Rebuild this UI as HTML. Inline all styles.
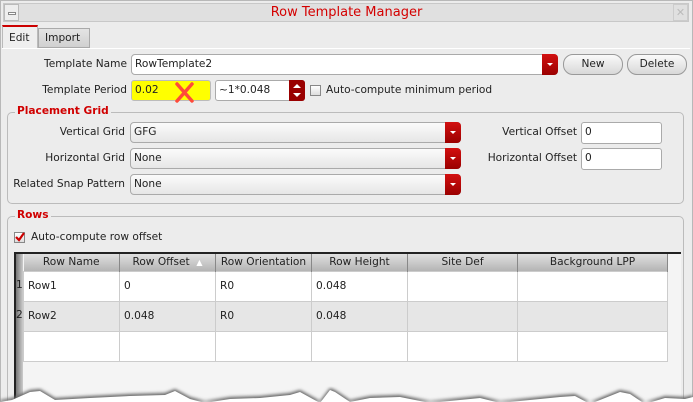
<!DOCTYPE html>
<html><head><style>
*{box-sizing:border-box;margin:0;padding:0}
html,body{width:693px;height:402px;overflow:hidden}
body{background:#fff;font-family:"DejaVu Sans","Liberation Sans",sans-serif;font-size:10.6px;color:#222;position:relative}
.a{position:absolute}
.win{left:0;top:0;width:693px;height:402px;background:#ececec;border:1px solid #b8b8b8}
.lbl{position:absolute;text-align:right;white-space:nowrap}
.inp{position:absolute;background:#fff;border:1px solid #aaa;border-radius:3px;padding-left:3px;line-height:19px}
.combo{position:absolute;border:1px solid #aaa;border-radius:4px;background:linear-gradient(#fbfbfb,#e6e6e6);padding-left:3px;line-height:19px}
.dd{position:absolute;right:-1px;top:-1px;bottom:-1px;width:16px;background:linear-gradient(#d21010,#9a0000);border-radius:0 4px 4px 0}
.dd:after{content:"";position:absolute;left:5px;top:9px;border-left:3px solid transparent;border-right:3px solid transparent;border-top:3px solid #fff}
.btn{position:absolute;border:1px solid #999;border-radius:10px;background:linear-gradient(#fafafa,#d8d8d8);text-align:center;line-height:19px}
.grp{position:absolute;border:1px solid #bbb;border-radius:5px}
.gt{position:absolute;color:#d00000;font-weight:bold;background:#ececec;padding:0 2px;line-height:12px}
.cb{position:absolute;width:11px;height:11px;border:1px solid #888;background:linear-gradient(#fff,#ddd)}
table{border-collapse:collapse;position:absolute;table-layout:fixed}
td{border:1px solid #ccc;height:30px;padding:0 0 0 4px;vertical-align:middle}
th{font-weight:normal;height:17px;background:linear-gradient(#e0e0e0,#b4b4b4);border-right:1px solid #888;text-align:center;padding:0}
</style></head><body>
<div class="a win"></div>
<div class="a" style="left:3px;top:3px;width:686px;height:19px;background:#e0e0e0;border:1px solid #c8c8c8"></div>
<div class="a" style="left:4px;top:4px;width:15px;height:17px;border:1px solid #bbb;background:#eee"><div class="a" style="left:3px;top:7px;width:8px;height:3px;border:1px solid #888;background:#fff"></div></div>
<div class="a" style="left:673px;top:4px;width:15px;height:17px;border:1px solid #ccc;color:#bbb;font-size:11px;text-align:center;line-height:16px">✕</div>
<div class="a" style="left:0;width:693px;top:5px;text-align:center;color:#d40000;font-size:13px">Row Template Manager</div>
<div class="a" style="left:2px;top:25px;width:36px;height:23px;background:#efefef;border-top:2px solid #c00;border-left:1px solid #bbb;border-right:1px solid #bbb;padding:5px 0 0 6px">Edit</div>
<div class="a" style="left:38px;top:28px;width:52px;height:20px;background:linear-gradient(#e4e4e4,#d0d0d0);border:1px solid #aaa;padding:3px 0 0 6px">Import</div>
<div class="a" style="left:2px;top:48px;width:688px;height:1px;background:#fff"></div>
<div class="lbl" style="right:566px;top:58px">Template Name</div>
<div class="combo" style="left:131px;top:54px;width:427px;height:21px;background:#fff">RowTemplate2<div class="dd"></div></div>
<div class="btn" style="left:563px;top:54px;width:60px;height:21px">New</div>
<div class="btn" style="left:627px;top:54px;width:60px;height:21px">Delete</div>
<div class="lbl" style="right:566px;top:84px">Template Period</div>
<div class="inp" style="left:131px;top:80px;width:80px;height:21px;background:#ffff00;border-color:#bbb">0.02</div>
<svg class="a" style="left:172px;top:80px" width="26" height="26"><path d="M5 4 L20 21 M20 4 L5 21" stroke="#ff4a3a" stroke-width="3.5" stroke-linecap="round"/></svg>
<div class="inp" style="left:215px;top:80px;width:90px;height:21px">~1*0.048<div class="a" style="right:-1px;top:-1px;bottom:-1px;width:16px;background:#9a0000;border-radius:0 3px 3px 0"><div class="a" style="left:4px;top:4px;border-left:4px solid transparent;border-right:4px solid transparent;border-bottom:4px solid #fff"></div><div class="a" style="left:4px;top:13px;border-left:4px solid transparent;border-right:4px solid transparent;border-top:4px solid #fff"></div></div></div>
<div class="cb" style="left:310px;top:85px"></div>
<div class="a" style="left:326px;top:84px">Auto-compute minimum period</div>

<div class="grp" style="left:7px;top:112px;width:677px;height:92px"></div>
<div class="gt" style="left:15px;top:105px">Placement Grid</div>
<div class="lbl" style="right:568px;top:126px">Vertical Grid</div>
<div class="combo" style="left:130px;top:122px;width:331px;height:21px">GFG<div class="dd"></div></div>
<div class="lbl" style="right:568px;top:152px">Horizontal Grid</div>
<div class="combo" style="left:130px;top:148px;width:331px;height:21px">None<div class="dd"></div></div>
<div class="lbl" style="right:568px;top:178px">Related Snap Pattern</div>
<div class="combo" style="left:130px;top:174px;width:331px;height:21px">None<div class="dd"></div></div>
<div class="lbl" style="right:116px;top:126px">Vertical Offset</div>
<div class="inp" style="left:581px;top:122px;width:81px;height:22px">0</div>
<div class="lbl" style="right:116px;top:152px">Horizontal Offset</div>
<div class="inp" style="left:581px;top:148px;width:81px;height:22px">0</div>

<div class="grp" style="left:7px;top:216px;width:677px;height:200px"></div>
<div class="gt" style="left:15px;top:209px">Rows</div>
<div class="cb" style="left:14px;top:232px"></div>
<svg class="a" style="left:14px;top:231px" width="12" height="12"><path d="M2 6 L5 9 L10 2" stroke="#c00" stroke-width="2.2" fill="none"/></svg>
<div class="a" style="left:31px;top:231px">Auto-compute row offset</div>
<div class="a" style="left:14px;top:252px;width:667px;height:150px;background:#f4f4f4;border-top:2px solid #222;border-left:2px solid #222"></div>
<div class="a" style="left:16px;top:254px;width:7px;height:148px;background:linear-gradient(90deg,#777,#ccc)"></div>
<div class="a" style="left:16px;top:279px">1</div><div class="a" style="left:16px;top:309px">2</div>
<table style="left:23px;top:254px;width:645px">
<col style="width:96px"><col style="width:96px"><col style="width:96px"><col style="width:96px"><col style="width:110px"><col>
<tr><th>Row Name</th><th>Row Offset &nbsp;<span style="font-size:8px;color:#fff">▲</span></th><th>Row Orientation</th><th>Row Height</th><th>Site Def</th><th>Background LPP</th></tr>
<tr style="background:#fff"><td>Row1</td><td>0</td><td>R0</td><td>0.048</td><td></td><td></td></tr>
<tr style="background:#e6e6e6"><td>Row2</td><td>0.048</td><td>R0</td><td>0.048</td><td></td><td></td></tr>
<tr style="background:#fff"><td></td><td></td><td></td><td></td><td></td><td></td></tr>
</table>
<svg class="a" style="left:0;top:375px" width="693" height="27">
<defs><filter id="b"><feGaussianBlur stdDeviation="1.6"/></filter></defs>
<path d="M0 27 L0 25 L12 23 L30 15 L40 14 L55 23 L90 21 L130 19 L165 18 L175 14 L190 22 L205 26 L230 22 L260 21 L290 18 L300 15 L320 26 L330 13 L335 15 L350 25 L370 21 L400 20 L430 26 L450 24 L480 21 L500 26 L530 23 L560 20 L575 19 L590 27 L620 15 L630 17 L645 27 L665 21 L685 22 L693 20 L693 27 Z" fill="#666" filter="url(#b)"/>
<path d="M0 27 L0 27 L12 25 L30 17 L40 16 L55 25 L90 23 L130 21 L165 20 L175 16 L190 24 L205 28 L230 24 L260 23 L290 20 L300 17 L320 28 L330 15 L335 17 L350 27 L370 23 L400 22 L430 28 L450 26 L480 23 L500 28 L530 25 L560 22 L575 21 L590 29 L620 17 L630 19 L645 29 L665 23 L685 24 L693 22 L693 27 Z" fill="#fff"/>
</svg>
</body></html>
